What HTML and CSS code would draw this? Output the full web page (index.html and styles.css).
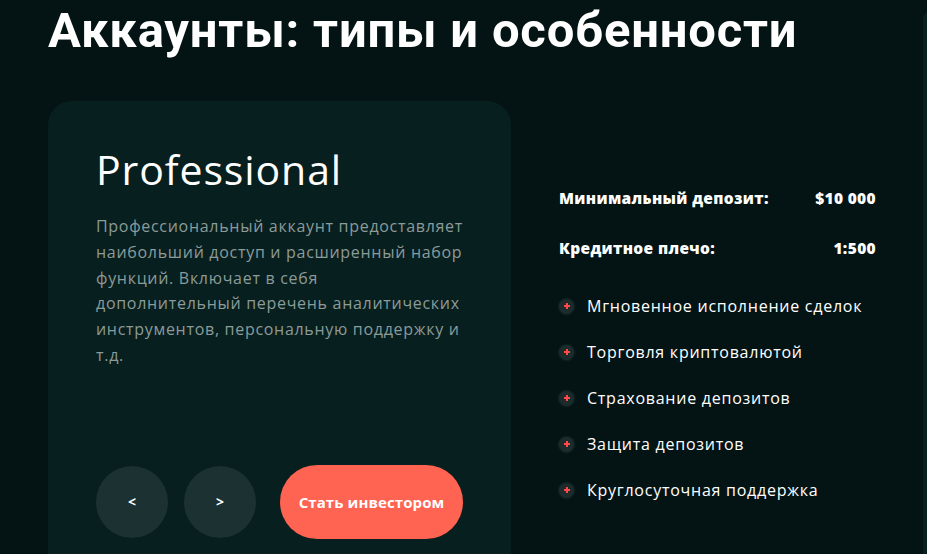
FILE: index.html
```html
<!DOCTYPE html>
<html lang="ru">
<head>
<meta charset="utf-8">
<title>Аккаунты</title>
<link rel="stylesheet" href="styles.css">
</head>
<body>
<main class="page">
  <h1 class="title">Аккаунты: типы и особенности</h1>
  <section class="slide">
    <div class="card">
      <h2 class="card-title">Professional</h2>
      <p class="card-text">Профессиональный аккаунт предоставляет наибольший доступ и расширенный набор функций. Включает в себя дополнительный перечень аналитических инструментов, персональную поддержку и т.д.</p>
      <div class="controls">
        <button class="nav-btn">&lt;</button>
        <button class="nav-btn">&gt;</button>
        <button class="cta">Стать инвестором</button>
      </div>
    </div>
    <div class="details">
      <div class="stat"><span>Минимальный депозит:</span><span>$10 000</span></div>
      <div class="stat"><span>Кредитное плечо:</span><span>1:500</span></div>
      <ul class="features">
        <li><i class="dot"></i>Мгновенное исполнение сделок</li>
        <li><i class="dot"></i>Торговля криптовалютой</li>
        <li><i class="dot"></i>Страхование депозитов</li>
        <li><i class="dot"></i>Защита депозитов</li>
        <li><i class="dot"></i>Круглосуточная поддержка</li>
      </ul>
    </div>
  </section>
</main>
</body>
</html>
```
FILE: styles.css
```css
* { box-sizing: border-box; }
html, body { margin: 0; padding: 0; }
body {
  background: #041414;
  color: #fff;
  font-family: "Open Sans", sans-serif;
  overflow: hidden;
  height: 554px;
  position: relative;
}
body::after {
  content: "";
  position: absolute;
  left: 923px;
  top: 12px;
  width: 8px;
  bottom: 0;
  background: #082020;
  border-top-left-radius: 6px;
}
.page {
  padding: 0 0 0 48px;
}
.title {
  margin: 0;
  padding-top: 3px;
  font-family: Roboto, sans-serif;
  font-weight: 700;
  font-size: 49px;
  line-height: 56px;
  letter-spacing: 0.8px;
}
.slide {
  display: flex;
  margin-top: 42px;
  gap: 48px;
  height: 460px;
  overflow: hidden;
}
.card {
  width: 463px;
  height: 500px;
  flex: none;
  background: #081f1f;
  border-radius: 24px;
  padding: 43px 48px 0 48px;
}
.card-title {
  margin: 0;
  font-weight: 400;
  font-size: 41px;
  line-height: 50px;
  letter-spacing: 0.9px;
}
.card-text {
  margin: 20px 0 0;
  width: 368px;
  color: #8b9b99;
  font-size: 16px;
  line-height: 25.8px;
  letter-spacing: 0.7px;
}
.controls {
  display: flex;
  align-items: center;
  margin-top: 96px;
}
.nav-btn {
  width: 72px;
  height: 72px;
  border-radius: 50%;
  border: 0;
  background: #1c3131;
  color: #fff;
  font-family: "Open Sans", sans-serif;
  font-weight: 700;
  font-size: 14px;
  margin-right: 16px;
  padding: 0;
}
.cta {
  margin-left: 8px;
  width: 183px;
  height: 74px;
  border: 0;
  border-radius: 37px;
  background: #ff6351;
  color: #fff;
  font-family: "Open Sans", sans-serif;
  font-weight: 700;
  font-size: 15px;
  letter-spacing: 0.1px;
  padding: 0;
}
.details {
  width: 317px;
  padding-top: 86px;
}
.stat {
  display: flex;
  justify-content: space-between;
  font-weight: 800;
  font-size: 15.5px;
  line-height: 22px;
  letter-spacing: 0.35px;
  margin-bottom: 28px;
}
.stat + .stat { margin-bottom: 24px; }
.features {
  list-style: none;
  margin: 0;
  padding: 0;
}
.features li {
  display: flex;
  align-items: center;
  height: 46px;
  font-size: 16px;
  letter-spacing: 0.75px;
}
.dot {
  width: 15px;
  height: 15px;
  border-radius: 50%;
  background: #1c2b2b;
  box-shadow: 0 0 3px rgba(40, 60, 60, 0.8);
  margin-right: 13px;
  position: relative;
  flex: none;
}
.dot::before, .dot::after {
  content: "";
  position: absolute;
  background: #ff4a4a;
  left: 50%;
  top: 50%;
  transform: translate(-50%, -50%);
}
.dot::before { width: 6px; height: 2px; }
.dot::after { width: 2px; height: 6px; }
```
